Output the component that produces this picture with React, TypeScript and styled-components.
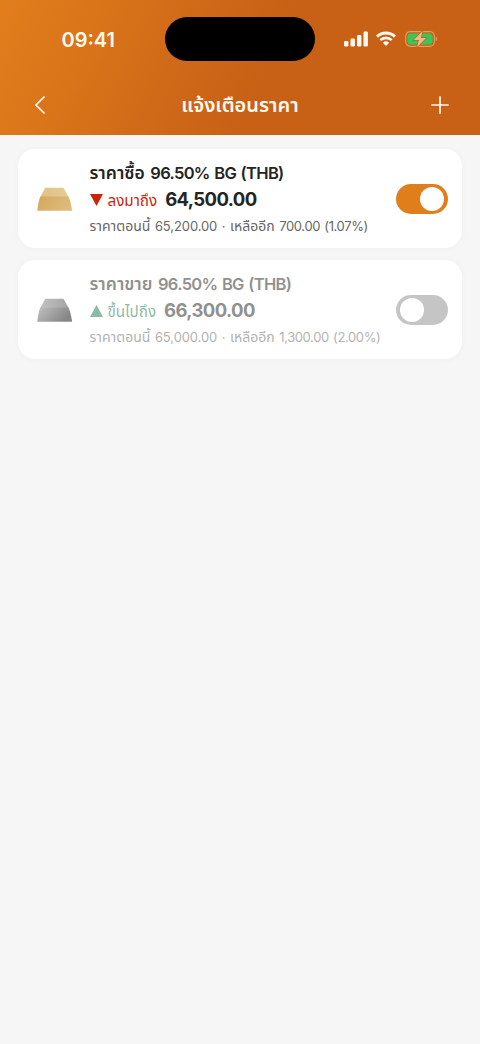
import React from "react";
import styled, { createGlobalStyle } from "styled-components";

const GlobalStyle = createGlobalStyle`
  * { box-sizing: border-box; }
  body {
    margin: 0;
    background: #f6f6f6;
    font-family: Inter, "Noto Sans Thai", "Noto Sans", sans-serif;
  }
`;

const Screen = styled.div`
  width: 480px;
  height: 1044px;
  overflow: hidden;
  background: #f6f6f6;
`;

const Header = styled.header`
  height: 135px;
  color: #fff9ef;
  background: linear-gradient(115deg, #e17e1c 0%, #d97419 20%, #cf6818 40%, #c86015 56%, #c86015 100%);
`;

const StatusBar = styled.div`
  display: grid;
  grid-template-columns: 165px 150px 165px;
  align-items: center;
  height: 77px;
`;

const Clock = styled.time`
  padding-left: 61.5px;
  padding-top: 2px;
  font-size: 20px;
  font-weight: 600;
  white-space: nowrap;
`;

const Island = styled.div`
  height: 44px;
  border-radius: 22px;
  background: #000;
`;

const Indicators = styled.div`
  display: flex;
  align-items: center;
  padding-left: 29px;
  gap: 8px;
  svg { display: block; flex: none; }
`;

const NavBar = styled.nav`
  display: flex;
  align-items: center;
  justify-content: space-between;
  height: 56px;
  padding: 0 29px;
`;

const IconButton = styled.button`
  display: grid;
  place-items: center;
  width: 22px;
  height: 22px;
  padding: 0;
  border: 0;
  color: inherit;
  background: none;
`;

const Title = styled.h1`
  margin: 0;
  font-size: 20px;
  font-weight: 600;
  line-height: 28px;
  white-space: nowrap;
`;

const List = styled.main`
  display: flex;
  flex-direction: column;
  gap: 12px;
  padding: 14px 18px;
`;

const Card = styled.article`
  display: flex;
  align-items: center;
  height: 99px;
  padding: 0 14px 0 18.5px;
  border-radius: 17px;
  background: #fff;
  box-shadow: 0 1px 8px rgba(0, 0, 0, 0.03);
`;

const Details = styled.div<{ $muted: boolean }>`
  flex: 1;
  padding: 1px 0 0 17px;
  white-space: nowrap;
  opacity: ${(p) => (p.$muted ? 0.5 : 1)};
`;

const Name = styled.h2`
  margin: 0;
  display: flex;
  align-items: baseline;
  gap: 5.500px;
  height: 26px;
  line-height: 26px;
  font-size: 16.500px;
  font-weight: 600;
  color: #242424;
`;

const Target = styled.div<{ $color: string }>`
  display: flex;
  align-items: baseline;
  height: 27px;
  line-height: 27px;
  font-size: 15.200px;
  color: ${(p) => p.$color};
  svg { margin-right: 5px; }
`;

const Amount = styled.strong`
  margin-left: 8px;
  font-size: 18.500px;
  font-weight: 650;
  letter-spacing: -0.6px;
  color: #242424;
`;

const Note = styled.p`
  margin: 0;
  display: flex;
  align-items: baseline;
  gap: 4.500px;
  height: 26px;
  line-height: 26px;
  font-size: 13px;
  color: #666;
`;

const Run = styled.span<{ $size?: number; $spacing?: number }>`
  font-size: ${(p) => (p.$size ? `${p.$size}px` : "inherit")};
  letter-spacing: ${(p) => p.$spacing ?? 0}px;
  word-spacing: 1px;
`;

const Toggle = styled.button<{ $on: boolean }>`
  display: flex;
  justify-content: ${(p) => (p.$on ? "flex-end" : "flex-start")};
  align-items: center;
  width: 52px;
  height: 30px;
  padding: 0 4px;
  border: 0;
  border-radius: 15px;
  background: ${(p) => (p.$on ? "#e07e1b" : "#c5c5c5")};
`;

const Knob = styled.span`
  width: 24px;
  height: 24px;
  border-radius: 50%;
  background: #fff;
`;

function Bar({ id, colors }: { id: string; colors: string[] }) {
  return (
    <svg width="36" height="24" viewBox="0 0 36 24">
      <defs>
        <linearGradient id={id} x1="0" y1="0" x2="1" y2="0.4">
          <stop offset="0" stopColor={colors[0]} />
          <stop offset="1" stopColor={colors[1]} />
        </linearGradient>
        <linearGradient id={id + "top"} x1="0" y1="0" x2="1" y2="0">
          <stop offset="0" stopColor={colors[2]} />
          <stop offset="1" stopColor={colors[3]} />
        </linearGradient>
      </defs>
      <path d="M8.200 .8h18.300l5.200 9.200H3.300z" fill={`url(#${id}top)`} />
      <path d="M3.400 9.500h28.100q1.800 3.500 3.700 14.200H.2Q1.600 13 3.400 9.500z" fill={`url(#${id})`} />
    </svg>
  );
}

type Alert = {
  id: string;
  on: boolean;
  name: string;
  product: string;
  direction: string;
  up: boolean;
  amount: string;
  current: string;
  left: string;
  metal: string[];
};

const alerts: Alert[] = [
  {
    id: "gold", on: true, name: "ราคาซื้อ", product: "96.50% BG (THB)", direction: "ลงมาถึง", up: false,
    amount: "64,500.00", current: "65,200.00", left: "700.00 (1.07%)",
    metal: ["#d3a757", "#debb7c", "#dfc184", "#e5cb96"],
  },
  {
    id: "silver", on: false, name: "ราคาขาย", product: "96.50% BG (THB)", direction: "ขึ้นไปถึง", up: true,
    amount: "66,300.00", current: "65,000.00", left: "1,300.00 (2.00%)",
    metal: ["#c0c0c0", "#868686", "#c2c2c2", "#a4a4a4"],
  },
];

function AlertCard({ alert }: { alert: Alert }) {
  return (
    <Card>
      <Bar id={alert.id} colors={alert.metal} />
      <Details $muted={!alert.on}>
        <Name>
          <Run $size={17.5}>{alert.name}</Run>
          <Run $spacing={-0.68}>{alert.product}</Run>
        </Name>
        <Target $color={alert.up ? "#16784f" : "#cb240b"}>
          <svg width="13" height="12" viewBox="0 0 13 12">
            <path d={alert.up ? "M6.500 0L13 12H0z" : "M0 0h13L6.500 12z"} fill="currentColor" />
          </svg>
          <Run>{alert.direction}</Run>
          <Amount>{alert.amount}</Amount>
        </Target>
        <Note>
          <Run $size={14}>ราคาตอนนี้</Run>
          <Run $spacing={-0.1}>{alert.current}</Run>
          <Run>·</Run>
          <Run $size={14}>เหลืออีก</Run>
          <Run $spacing={-0.38}>{alert.left}</Run>
        </Note>
      </Details>
      <Toggle $on={alert.on} role="switch" aria-checked={alert.on}><Knob /></Toggle>
    </Card>
  );
}

export default function App() {
  return (
    <Screen>
      <GlobalStyle />
      <Header>
        <StatusBar>
          <Clock>09:41</Clock>
          <Island />
          <Indicators>
            <svg width="24" height="16" viewBox="0 0 24 16" fill="currentColor">
              <rect x="0" y="10" width="4.400" height="5.500" rx="1.200" />
              <rect x="6.500" y="7.500" width="4.400" height="8" rx="1.200" />
              <rect x="13" y="4" width="4.400" height="11.500" rx="1.200" />
              <rect x="19.500" y="0.500" width="4.400" height="15" rx="1.200" />
            </svg>
            <svg width="20" height="15" viewBox="0 0 20 15" fill="none" stroke="currentColor">
              <path d="M1 5.600a13 13 0 0 1 18 0" strokeWidth="2.900" />
              <path d="M4.300 9.100a8.300 8.300 0 0 1 11.400 0" strokeWidth="2.600" />
              <path d="M6.800 11.700a4.700 4.700 0 0 1 6.400 0L10 15z" fill="currentColor" stroke="none" />
            </svg>
            <svg width="34" height="18" viewBox="0 0 34 18">
              <rect x="1.700" y="1.700" width="28.600" height="14.600" rx="4.500" fill="none" stroke="#e39a63" strokeWidth="1.200" />
              <rect x="3.500" y="3.500" width="25" height="11" rx="2.800" fill="#34c759" />
              <path d="M31.600 6.500c2 .8 2 4.200 0 5z" fill="#e39a63" />
              <path d="M18.600 1L9.600 10h5.300L13.100 17l9-9h-5.300z" fill="#f0b88b" stroke="#c86015" strokeWidth="1.400" paintOrder="stroke" />
            </svg>
          </Indicators>
        </StatusBar>
        <NavBar>
          <IconButton aria-label="Back">
            <svg width="22" height="22" viewBox="0 0 22 22" fill="none" stroke="currentColor" strokeWidth="1.700">
              <path d="M15.500 2.500L7 11l8.500 8.500" />
            </svg>
          </IconButton>
          <Title>แจ้งเตือนราคา</Title>
          <IconButton aria-label="Add">
            <svg width="22" height="22" viewBox="0 0 22 22" fill="none" stroke="currentColor" strokeWidth="1.700">
              <path d="M11 2.300v17.400M2.300 11h17.400" />
            </svg>
          </IconButton>
        </NavBar>
      </Header>
      <List>
        {alerts.map((a) => <AlertCard key={a.id} alert={a} />)}
      </List>
    </Screen>
  );
}
